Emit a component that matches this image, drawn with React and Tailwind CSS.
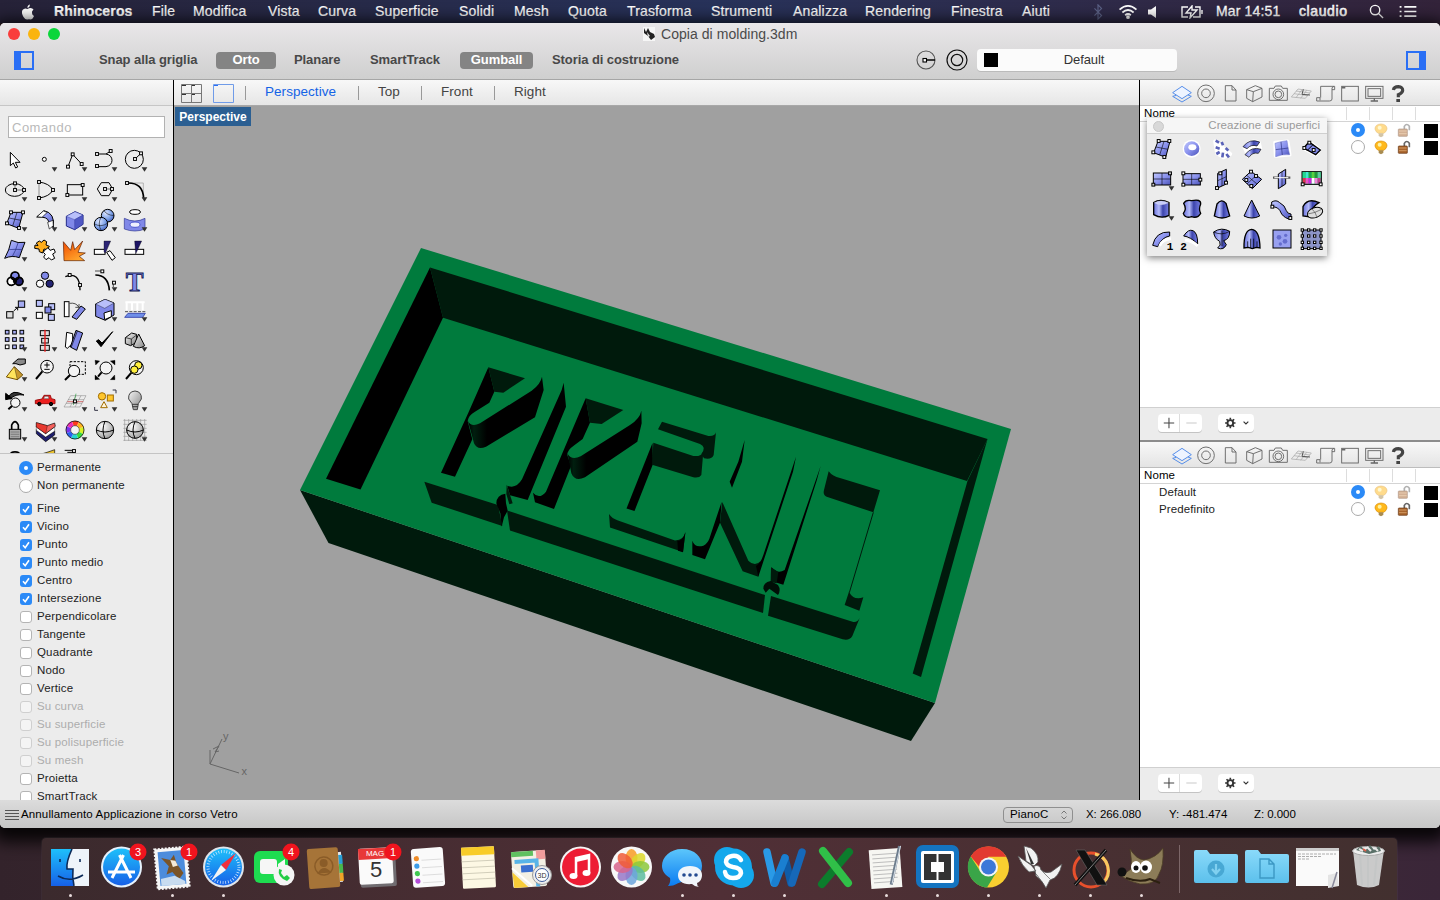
import React from "react";

const BLUE = "#8088e8";
const LIGHT = "#b9c0fa";

/* ---------- small drawing helpers ---------- */

function Sq({ at, s = 8.6, fill = "#fff" }) {
  return at.map(([x, y], i) => (
    <rect key={i} x={x - s / 2} y={y - s / 2} width={s} height={s} fill={fill} stroke="#000" strokeWidth="3" />
  ));
}

function Defs() {
  return (
    <svg className="absolute h-0 w-0" aria-hidden="true">
      <defs>
        <linearGradient id="blueFill" x1="0" y1="0" x2="1" y2="1">
          <stop offset="0" stopColor="#c0c7fc" />
          <stop offset="0.5" stopColor="#8a92ee" />
          <stop offset="1" stopColor="#4a52b8" />
        </linearGradient>
        <linearGradient id="blueBand" x1="0" y1="0" x2="1" y2="0">
          <stop offset="0" stopColor="#6870dc" />
          <stop offset="0.35" stopColor="#b4bbfa" />
          <stop offset="0.6" stopColor="#3c44ac" />
          <stop offset="1" stopColor="#7a82e6" />
        </linearGradient>
        <linearGradient id="grayFill" x1="0" y1="0" x2="1" y2="1">
          <stop offset="0" stopColor="#f4f4f4" />
          <stop offset="1" stopColor="#858585" />
        </linearGradient>
        <linearGradient id="orangeFill" x1="0" y1="0" x2="0.6" y2="1">
          <stop offset="0" stopColor="#f04800" />
          <stop offset="1" stopColor="#ffa52c" />
        </linearGradient>
        <linearGradient id="skyFill" x1="0" y1="0" x2="0" y2="1">
          <stop offset="0" stopColor="#1ec0fa" />
          <stop offset="1" stopColor="#1660e8" />
        </linearGradient>
        <linearGradient id="bubbleFill" x1="0" y1="0" x2="0" y2="1">
          <stop offset="0" stopColor="#5cc6fb" />
          <stop offset="1" stopColor="#0a7cf2" />
        </linearGradient>
        <linearGradient id="wallEnd" x1="0" y1="0" x2="1" y2="0">
          <stop offset="0" stopColor="#000" />
          <stop offset="0.08" stopColor="#001f0f" />
          <stop offset="0.25" stopColor="#000" />
        </linearGradient>
        <linearGradient id="calcFolder" x1="0" y1="0" x2="0" y2="1">
          <stop offset="0" stopColor="#8adafa" />
          <stop offset="1" stopColor="#5cc0ec" />
        </linearGradient>
        <radialGradient id="ball" cx="0.35" cy="0.3" r="0.8">
          <stop offset="0" stopColor="#dde6ff" />
          <stop offset="0.6" stopColor="#7ba0e8" />
          <stop offset="1" stopColor="#3c56b4" />
        </radialGradient>
        <radialGradient id="grayBall" cx="0.35" cy="0.3" r="0.9">
          <stop offset="0" stopColor="#fff" />
          <stop offset="1" stopColor="#8c8c8c" />
        </radialGradient>
      </defs>
    </svg>
  );
}

const Drop = () => <path d="M65 67H82L73.5 80Z" fill="#333" />;

function Tool({ children, drop }) {
  return (
    <svg viewBox="0 0 90 90" className="block h-[30px] w-[30px] overflow-visible" fill="none" stroke="#000" strokeWidth="3">
      {children}
      {drop ? <g stroke="none"><Drop /></g> : null}
    </svg>
  );
}

const Lens = ({ x = 45, y = 38, r = 18, tx = 18, ty = 72 }) => (
  <>
    <path d={`M${x - r * 0.7} ${y + r * 0.7}L${tx} ${ty}`} strokeWidth="6" />
    <circle cx={x} cy={y} r={r} fill="#f4f4f4" />
  </>
);

const Mesh4 = () => (
  <>
    <path d="M33 22H69L56 70L20 56Z" fill="url(#blueFill)" />
    <path d="M51 22L38 63M27 39L63 46" strokeWidth="1.8" />
  </>
);

/* ---------- left tool palette ---------- */

const tools = [
  [0, <path d="M31 22V62L40 54L47 69L53 66L46 52H60Z" fill="#fff" />],
  [1, <circle cx="43" cy="43" r="6" fill="#fff" />],
  [1, <><path d="M24 65L38 28L65 57" /><Sq at={[[24, 65], [38, 28], [65, 57]]} /></>],
  [1, <><path d="M21 27H48C72 30 72 62 48 65H21M48 27L62 18" strokeWidth="3" /><Sq at={[[21, 27], [62, 18], [21, 63]]} /></>],
  [1, <><circle cx="43" cy="43" r="27" /><path d="M45 42L63 25" /><Sq at={[[45, 42], [63, 25]]} /></>],

  [1, <><ellipse cx="44" cy="45" rx="28" ry="19" /><path d="M45 25V45H72" strokeWidth="1.6" /><Sq at={[[45, 25], [45, 45], [72, 45]]} /></>],
  [1, <><path d="M27 21V69" strokeWidth="1.2" /><path d="M27 21Q58 25 69 45Q58 65 27 69" /><Sq at={[[27, 21], [27, 69], [69, 45]]} /></>],
  [1, <><rect x="22" y="29" width="46" height="31" /><Sq at={[[22, 60], [68, 30]]} /></>],
  [1, <><path d="M34 23H57L68 42L57 62H34L22 42Z" /><path d="M45 42H66" strokeWidth="1.6" /><Sq at={[[45, 42], [66, 42]]} /></>],
  [1, <><path d="M21 24H70V70" stroke="#999" strokeWidth="2" /><path d="M21 24Q70 22 71 72" strokeWidth="5" /><Sq at={[[21, 24]]} /></>],

  [1, <><Mesh4 /><Sq at={[[33, 22], [69, 22], [57, 69], [21, 55]]} /></>],
  [1, <><path d="M20 36L42 17Q76 24 70 68L56 50Q54 34 20 36Z" fill="url(#blueFill)" /><path d="M21 35L40 18L52 22L36 37Z" fill="#fff" strokeWidth="2" /><path d="M53 52L69 46L70 62L58 72Z" fill="#fff" strokeWidth="2" /></>],
  [1, <><path d="M19 34L45 20L69 30V58L44 74L19 63Z" fill={BLUE} stroke="#222a88" /><path d="M19 34L45 20L69 30L44 44Z" fill={LIGHT} strokeWidth="1" stroke="#222a88" /><path d="M44 44L69 30V58L44 74Z" fill="#5058c4" strokeWidth="1" stroke="#222a88" /></>],
  [1, <><circle cx="53" cy="32" r="19" fill="url(#ball)" /><circle cx="33" cy="57" r="20" fill="url(#ball)" /><path d="M14 57Q33 68 52 55M33 37Q22 57 34 77M42 17Q50 30 72 32" strokeWidth="1.6" /></>],
  [1, <><ellipse cx="45" cy="21" rx="16" ry="7" fill="#fff" /><path d="M13 40Q45 56 75 40V72Q45 84 13 72Z" fill={BLUE} strokeWidth="2" stroke="#2c3490" /><ellipse cx="45" cy="59" rx="15" ry="8" fill="#eef0ff" stroke="#4b56d0" /></>],

  [1, <><path d="M34 16Q54 26 75 22Q66 44 58 68Q36 60 14 70Q28 46 34 16Z" fill="url(#blueFill)" /><path d="M54 24Q48 46 36 66M25 44Q46 42 68 44" strokeWidth="2" stroke="#222a78" /></>],
  [0, <><path d="M19 24L28 18L34 22L42 15L50 20L48 30L58 34L52 44L42 42L38 54L28 50L27 42L14 40L15 30L24 32Z" fill="#ffae1c" /><path d="M44 46L54 38L60 46L72 42L76 52L68 57L74 70L64 75L57 68L48 74L41 66L46 58L40 52Z" fill="#fff" /></>],
  [0, <path d="M10 20L32 46L38 20L44 44L68 18L54 52L76 54L58 64L74 77H12Z" fill="url(#orangeFill)" stroke="#5a1c00" strokeWidth="2" />],
  [0, <><rect x="13" y="43" width="32" height="15" fill="#fff" /><path d="M50 52L60 47L76 68L66 76Z" fill="#fff" /><path d="M42 18H62L46 55L42 50Z" fill="#2c2474" strokeWidth="1" /></>],
  [0, <><rect x="15" y="43" width="56" height="15" fill="#fff" /><path d="M44 18H65L47 57Z" fill="#1c1464" strokeWidth="1" /></>],

  [1, <><circle cx="34" cy="49" r="12" fill="#fff" /><circle cx="57" cy="49" r="12" fill="#242474" /><circle cx="45" cy="33" r="12" fill={BLUE} /><path d="M45 57Q35 48 45 40Q55 48 45 57Z" fill="#111" /><circle cx="34" cy="49" r="12" strokeWidth="5" /><circle cx="57" cy="49" r="12" strokeWidth="5" /><circle cx="45" cy="33" r="12" strokeWidth="5" /></>],
  [0, <><circle cx="45" cy="32" r="11" fill={BLUE} /><circle cx="30" cy="56" r="11" fill="#fff" /><circle cx="59" cy="56" r="11" fill="#242474" /></>],
  [0, <><path d="M16 35Q60 18 60 76" strokeWidth="4" /><Sq at={[[29, 30], [60, 60]]} /></>],
  [1, <><path d="M16 30Q55 30 58 76" strokeWidth="5" /><path d="M15 18H34M70 48V66" strokeWidth="2" /><Sq at={[[37, 19], [72, 53]]} /></>],
  [0, <text x="17" y="77" fontFamily="Liberation Serif, serif" fontSize="80" fontWeight="bold" fill={BLUE} stroke="#111650" strokeWidth="2.5">T</text>],

  [1, <><rect x="20" y="50" width="19" height="19" fill="#ddd" /><rect x="55" y="18" width="19" height="19" fill="#a4aaf0" /><path d="M41 48L52 38M45 37H53V46" /></>],
  [0, <>{[[19, 16, LIGHT], [19, 52, "#fff"], [55, 58, LIGHT], [56, 26, LIGHT], [45, 36, BLUE]].map(([x, y, f], i) => <rect key={i} x={x} y={y} width="18" height="18" fill={f} />)}</>],
  [0, <><rect x="13" y="20" width="14" height="45" fill="#fff" /><path d="M63 33L76 42L50 73L36 66Z" fill={BLUE} /><path d="M29 25Q48 22 56 36M57 27V37H46" strokeWidth="2" /></>],
  [1, <><path d="M17 27L45 13L72 24V60L46 76L17 64Z" fill={BLUE} /><path d="M17 27L45 13L72 24L44 40Z" fill={LIGHT} strokeWidth="1" /><path d="M42 54L64 47V65L44 74Z" fill="#fff" /></>],
  [1, <><path d="M16 22H74M20 22V46M36 22V46M52 22V46M68 22V46" stroke="#fff" strokeWidth="6" /><path d="M15 50H76" strokeDasharray="9 4" strokeWidth="2" /><path d="M24 55H76L68 67H14Z" fill="#6f8fe8" stroke="#4250b4" /></>],

  [1, <>{[16, 38, 60].flatMap((x) => [16, 38, 60].map((y) => <rect key={x + "-" + y} x={x} y={y} width="11" height="11" fill={x === 16 && y === 60 ? "#fff" : "#a8aef4"} />))}</>],
  [1, <><rect x="31" y="17" width="27" height="15" fill="#ddd" /><rect x="35" y="40" width="20" height="14" fill="#ddd" /><rect x="31" y="61" width="27" height="15" fill="#ddd" /><path d="M45 14V80" stroke="#f01818" strokeWidth="4" /></>],
  [1, <><path d="M20 22L38 26V55L22 70L16 66Z" fill="#fff" /><path d="M48 16L68 24L50 76L31 66Z" fill={BLUE} /><path d="M34 66L52 18" strokeWidth="2" /></>],
  [1, <path d="M19 48L33 65L68 20L36 54L26 44Z" strokeWidth="3" fill="#000" />],
  [1, <><path d="M16 38L35 24L50 28V52L32 62L16 56Z" fill="url(#grayFill)" /><path d="M17 38L34 42L50 30M34 42V60" strokeWidth="2" /><path d="M56 27L74 62Q58 74 40 64Z" fill="url(#grayFill)" /></>],

  [1, <><path d="M19 66L43 35L68 60L52 74Z" fill="#ffe45c" stroke="#7a5400" /><path d="M43 35L68 60L52 74Z" fill="#c8982c" strokeWidth="1" /><path d="M38 26L54 12L76 12V26L60 30L48 26Z" fill="#8a8a8a" /></>],
  [0, <><Lens x={51} y={35} r={19} /><path d="M43 30H59M51 22V38M43 43H59" strokeWidth="3" /></>],
  [0, <><rect x="30" y="20" width="46" height="38" strokeDasharray="7 4" /><Lens x={42} y={48} r={17} tx={15} ty={75} /></>],
  [0, <><path d="M15 16L29 18L17 30ZM75 16V30L61 18ZM15 74V60L29 73ZM75 74H61L74 60Z" fill="#000" strokeWidth="1" /><Lens x={48} y={39} r={18} tx={24} ty={65} /></>],
  [0, <><Lens x={49} y={38} r={21} /><circle cx="55" cy="31" r="11" fill="#ffef3e" /><circle cx="43" cy="44" r="11" fill="#ffef3e" /></>],

  [1, <><path d="M24 39Q36 10 72 30Q45 26 31 42Z" fill="#333" /><path d="M17 25V44L36 40Z" fill="#000" /><Lens x={46} y={53} r={14} tx={25} ty={73} /></>],
  [1, <><path d="M16 46L36 42L42 31H61L64 41L75 44V56H16Z" fill="#ed2020" stroke="#a01010" /><circle cx="28" cy="57" r="5" fill="#111" /><circle cx="63" cy="57" r="5" fill="#111" /><path d="M44 34H55L57 41H41Z" fill="#eee" strokeWidth="1" /></>],
  [1, <><path d="M32 32H78L60 66H12ZM24 44H72M18 55H66M48 32L30 66M63 32L45 66" strokeWidth="1.4" stroke="#777" /><path d="M48 26L40 60" stroke="#2c9c40" strokeWidth="2" /><path d="M22 50H70" stroke="#c83030" strokeWidth="2" /><Sq at={[[45, 49]]} /></>],
  [1, <><circle cx="36" cy="34" r="11" fill="#ffc62c" stroke="#a06c00" /><rect x="52" y="30" width="18" height="18" fill="#ffc62c" stroke="#a06c00" /><path d="M42 50L32 68H52Z" fill="#fff3d8" stroke="#a06c00" /><path d="M68 15H78V25M14 66V76H24" strokeWidth="3" stroke="#334" /></>],
  [1, <><path d="M45 18Q66 20 64 42L55 56L52 74H40L36 56L26 42Q24 20 45 18Z" fill="url(#grayFill)" stroke="#444" /><path d="M37 58H54M38 65H53" strokeWidth="2" /></>],

  [1, <><path d="M35 45V30Q45 10 55 30V45" strokeWidth="5" /><rect x="28" y="43" width="34" height="29" fill="#aaa" /><path d="M32 51H58M32 58H58M32 65H58" stroke="#666" strokeWidth="2" /></>],
  [1, <><path d="M19 43L47 66L74 48V60L47 80L19 56Z" fill="#20206e" strokeWidth="2" /><path d="M19 33L47 56L74 36V48L47 66L19 46Z" fill="#fff" strokeWidth="1" /><path d="M19 23L52 32L74 24L76 34L47 56L19 36Z" fill="#f4605c" strokeWidth="2" /><path d="M19 23L52 32L47 56L19 36Z" fill="#e83a30" strokeWidth="1" /></>],
  [1, <>{["#ff3b1c", "#ffb31c", "#d6f224", "#35dc3c", "#22d7d0", "#2864f0", "#7a34ec", "#ef2cb4"].map((c, i) => <path key={c} d="M45 45L37 20A27 27 0 0 1 56 20Z" transform={`rotate(${i * 45} 45 45)`} fill={c} stroke={c} strokeWidth="1" />)}<circle cx="45" cy="45" r="27" strokeWidth="2.2" /><circle cx="45" cy="45" r="13" fill="#f4f4f4" strokeWidth="2" stroke="#444" /></>],
  [0, <><circle cx="45" cy="45" r="26" fill="url(#grayBall)" /><path d="M45 19Q33 45 45 71M19 45Q45 57 71 45" /></>],
  [1, <><path d="M14 12V78M26 12V78M38 12V78M50 12V78M62 12V78M74 12V78M10 16H80M10 28H80M10 40H80M10 52H80M10 64H80M10 76H80" stroke="#999" strokeWidth="2" /><circle cx="45" cy="45" r="25" fill="url(#grayBall)" /><path d="M45 20Q33 45 45 70M20 45Q45 57 70 45" /></>],

  [0, <path d="M32 24Q45 17 58 24" strokeWidth="5" />],
  [0, <path d="M38 26L54 21L74 14V30H38Z" fill="#e8c030" strokeWidth="2" />],
  [0, <><path d="M14 16H38M22 22H40" strokeWidth="3" /><Sq at={[[42, 18]]} /></>],
];

/* ---------- floating surface palette ---------- */

const Halo = ({ d }) => <path d={d} stroke="#fff" strokeWidth="11" strokeLinejoin="round" fill="#fff" />;

const surfaces = [
  [0, <><Mesh4 /><Sq at={[[35, 21], [67, 21], [52, 69], [19, 55]]} /></>],
  [0, <><circle cx="44" cy="44" r="27" fill="#fff" stroke="none" /><ellipse cx="44" cy="44" rx="23" ry="22" fill="url(#blueFill)" stroke="none" /><ellipse cx="46" cy="40" rx="12" ry="9" fill="#fff" stroke="none" /></>],
  [0, <><Halo d="M24 22L70 60L50 70L30 58Z" /><path d="M26 20L36 26M44 24L48 34M26 40L38 44M28 60L38 54M46 70L48 56M56 42L64 50M58 60L66 70" stroke="#5a62b8" strokeWidth="8" /></>],
  [0, <><Halo d="M22 40Q40 14 66 26L70 44Q50 46 34 66Z" /><path d="M18 38Q38 12 68 24L60 36Q42 30 30 44ZM24 62Q44 36 72 46L64 58Q46 54 36 70Z" fill="url(#blueBand)" strokeWidth="2" /></>],
  [0, <><Halo d="M24 26L62 22L68 62L26 66Z" /><path d="M24 28Q42 22 60 20Q62 40 68 62Q46 60 26 68Q28 48 24 28Z" fill="url(#blueFill)" stroke="#6870c8" strokeWidth="1.5" /><path d="M42 24L46 63M26 47L64 42" strokeWidth="2" stroke="#2c3280" /></>],
  [0, <><Halo d="M22 44L38 24L68 48L56 62Z" /><path d="M20 42L36 24L70 48L56 62Z" fill={BLUE} strokeWidth="4" /><path d="M30 50L48 32" /><Sq at={[[37, 26], [22, 42], [50, 48]]} /></>],

  [1, <><rect x="19" y="27" width="52" height="36" fill="url(#blueFill)" /><path d="M45 27V63M19 45H71" strokeWidth="1.8" /><Sq at={[[19, 62], [69, 28]]} fill="#ccc" /></>],
  [0, <><rect x="18" y="29" width="52" height="34" fill="url(#blueFill)" /><path d="M44 29V63M18 46H70" strokeWidth="1.8" /><Sq at={[[19, 28], [19, 62], [70, 47]]} /></>],
  [0, <><path d="M32 28L58 16V60L32 72Z" fill="url(#blueFill)" /><path d="M45 22V66M32 50L58 38" strokeWidth="1.8" /><Sq at={[[40, 28], [30, 72], [57, 56]]} /></>],
  [0, <><path d="M16 46L42 22L74 46L46 74Z" fill="url(#blueFill)" /><path d="M29 34L60 60M30 60L58 34" strokeWidth="1.8" /><Sq at={[[42, 23], [57, 36], [28, 48], [43, 66]]} /></>],
  [0, <><path d="M34 30L56 16V60L34 74Z" fill="url(#blueFill)" /><path d="M45 23V67" strokeWidth="1.8" /><path d="M18 41H34M50 41H70" stroke="#555" strokeWidth="7" /><path d="M22 41H64" stroke="#fff" strokeWidth="3" /></>],
  [0, <><rect x="15" y="23" width="58" height="38" fill="#18b060" />{["#20d890", "#40e8d0", "#18a848", "#58d040", "#209838", "#60c8a0"].map((c, i) => <rect key={c} x={17 + i * 9} y="24" width="9" height="18" fill={c} stroke="none" />)}{["#e03050", "#f050c8", "#d020e0", "#fff", "#f080d8", "#c04090"].map((c, i) => <rect key={c} x={17 + i * 9} y="42" width="9" height="17" fill={c} stroke="none" />)}<Sq at={[[17, 61], [71, 61]]} /></>],

  [1, <><path d="M20 26Q40 12 66 26V64Q44 76 20 62Z" fill="url(#blueBand)" strokeWidth="4" /><path d="M22 26Q42 16 64 26Q42 38 22 26Z" strokeWidth="1" stroke="#dde" fill="#c8cdfc" /></>],
  [0, <path d="M20 28Q26 16 44 20Q72 14 71 30Q64 46 71 58Q62 74 44 68Q24 74 19 58Q30 44 20 28Z" fill="url(#blueBand)" strokeWidth="4" />],
  [0, <path d="M30 30Q44 12 57 28L68 66Q45 78 22 66Z" fill="url(#blueBand)" strokeWidth="4" />],
  [0, <path d="M44 18L68 66Q45 78 21 66Z" fill="url(#blueBand)" strokeWidth="3" />],
  [0, <><path d="M14 24Q28 16 38 26Q54 34 58 50Q62 60 72 60V76Q54 74 44 60Q34 34 14 40Z" fill="url(#blueFill)" strokeWidth="3" /><Sq at={[[16, 38], [70, 72]]} /></>],
  [0, <><path d="M18 66V38Q32 10 66 26Q46 36 36 68Z" fill="url(#blueBand)" strokeWidth="4" /><ellipse cx="54" cy="56" rx="24" ry="15" fill="#ddd" transform="rotate(-20 54 56)" /><path d="M44 44Q56 54 60 70M32 60Q52 58 74 46" strokeWidth="1.3" /></>],

  [0, <><path d="M17 64Q26 22 68 24V36Q44 40 32 68Z" fill="url(#blueFill)" strokeWidth="3" /><path d="M38 66Q46 46 72 44" stroke="#fff" strokeWidth="8" /><text x="59" y="78" fontSize="33" fontFamily="Liberation Mono, monospace" fontWeight="bold" fill="#000" stroke="none">1</text></>],
  [0, <><path d="M20 36Q34 14 48 20Q62 26 62 60Q40 38 20 36Z" fill="url(#blueBand)" strokeWidth="3" /><path d="M24 48Q46 50 62 66" stroke="#fff" strokeWidth="9" /><text x="10" y="79" fontSize="33" fontFamily="Liberation Mono, monospace" fontWeight="bold" fill="#000" stroke="none">2</text></>],
  [0, <><path d="M20 24Q44 8 68 22Q68 46 50 50L58 62Q50 80 32 72Q44 64 38 52Q22 44 20 24Z" fill="url(#blueBand)" /><path d="M20 24Q44 36 68 22M45 20V66" strokeWidth="2" /></>],
  [0, <><path d="M21 72Q20 18 44 16Q68 18 69 72L58 70L46 74L34 70Z" fill="url(#blueBand)" strokeWidth="4" /><path d="M32 52V70M41 44V72M50 44V72M60 52V70" strokeWidth="2.2" /></>],
  [0, <><rect x="18" y="18" width="54" height="54" fill="#98a0f0" /><g fill="#5058c0" stroke="none" opacity="0.7"><circle cx="36" cy="40" r="7" /><circle cx="54" cy="52" r="7" /><circle cx="56" cy="34" r="5" /><circle cx="40" cy="60" r="5" /></g></>],
  [0, <><rect x="16" y="18" width="56" height="56" fill="#8c94c8" /><Sq s={7} at={[16, 35, 53, 72].flatMap((x) => [18, 36, 55, 73].map((y) => [x, y]))} /></>],
];

/* ---------- inspector tabs ---------- */

const tabs = [
  <g stroke="#4a86e8"><path d="M19 43L8 46L36 63L64 46L54 42" fill="none" /><path d="M8 35L36 16L64 35L36 53Z" fill="#eef4ff" /></g>,
  <><circle cx="36" cy="37" r="25" /><circle cx="36" cy="37" r="13" /></>,
  <path d="M22 14H42L54 27V60H22ZM42 14V27H54" />,
  <path d="M14 26L40 14L60 22V48L32 62L14 52ZM14 26L34 32L60 22M34 32L32 62" />,
  <><path d="M10 22H24L28 15H46L50 22H64V58H10Z" /><circle cx="37" cy="40" r="16" /><circle cx="37" cy="40" r="10" /></>,
  <g stroke="#aaa" strokeWidth="2.2"><path d="M24 24L64 30L46 52L4 48ZM18 30L60 36M12 38L54 44M36 26L18 50M50 28L32 52" /><path d="M40 25L36 40L60 42" stroke="#555" strokeWidth="3" /></g>,
  <path d="M20 16H62V26H54M54 20V54Q54 60 46 60H8V50H18V58M20 16V50M54 20L60 16" />,
  <><rect x="11" y="16" width="50" height="44" /><path d="M12 20H22" strokeWidth="5" /></>,
  <><rect x="11" y="16" width="52" height="36" /><rect x="18" y="23" width="38" height="23" /><path d="M26 60H48M37 52V60" strokeWidth="4" /></>,
  <path d="M22 27Q24 17 37 17Q51 18 50 29Q48 37 37 41V49" stroke="#444" strokeWidth="9.5" />,
];

function TabBar() {
  return (
    <div className="flex h-[26px] shrink-0 items-center border-b border-[#bdbdbd] bg-linear-to-b from-[#f8f8f8] to-[#e4e4e4] pl-[30px]">
      {tabs.map((t, i) => (
        <svg key={i} viewBox="0 0 72 72" className="mt-px block h-6 w-6" fill="none" stroke="#666" strokeWidth="2.8">
          {t}
          {i === 9 ? <rect x="31" y="54" width="11" height="9" fill="#444" stroke="none" /> : null}
        </svg>
      ))}
    </div>
  );
}

function Radio({ on }) {
  return on ? (
    <span className="flex h-[14px] w-[14px] shrink-0 items-center justify-center rounded-full bg-[#2b8af7]">
      <span className="h-[4px] w-[4px] rounded-full bg-white" />
    </span>
  ) : (
    <span className="h-[14px] w-[14px] shrink-0 rounded-full border border-[#aaa] bg-white" />
  );
}

function LayerRow({ name, on }) {
  return (
    <div className="flex h-[17px] items-center">
      <span className="w-[211px] pl-[19px] text-[11.5px] tracking-[0.1px] text-[#222]">{name}</span>
      <span className="-mt-[2px] flex"><Radio on={on} /></span>
      <svg viewBox="0 0 42 45" className={on ? "ml-[9px] h-[15px] w-[14px] opacity-50" : "ml-[9px] h-[15px] w-[14px]"}>
        <path d="M21 3Q39 4 39 18Q37 27 29 31H13Q5 27 3 18Q3 4 21 3Z" fill="#ffb91c" stroke="#d88a00" strokeWidth="2" />
        <circle cx="17" cy="14" r="6" fill="#fff2a0" />
        <path d="M14 31H28V39L21 43L14 39Z" fill="#a88b50" />
      </svg>
      <svg viewBox="0 0 42 45" className={on ? "ml-[9px] h-[15px] w-[14px] opacity-50" : "ml-[9px] h-[15px] w-[14px]"}>
        <path d="M22 20V10Q29 -1 37 10V22" fill="none" stroke="#666" strokeWidth="5" />
        <rect x="4" y="18" width="27" height="22" rx="2" fill="#a8642c" stroke="#653410" strokeWidth="2" />
        <path d="M6 24H29M6 32H29" stroke="#e8b47c" strokeWidth="2" />
      </svg>
      <span className="ml-[13px] h-[14px] w-[14px] bg-black" />
    </div>
  );
}

function LayerHeader() {
  return (
    <div className="flex h-4 shrink-0 items-center border-b border-[#d4d4d4] bg-white text-[11.5px] tracking-[0.1px]">
      <span className="w-[206px] pl-1">Nome</span>
      <span className="h-[13px] w-[23px] border-l border-[#ddd]" />
      <span className="h-[13px] w-[23px] border-l border-[#ddd]" />
      <span className="h-[13px] w-[23px] border-l border-[#ddd]" />
      <span className="h-[13px] w-[23px] border-l border-[#ddd]" />
    </div>
  );
}

function LayerFooter() {
  return (
    <div className="flex h-[33px] shrink-0 items-start border-t border-[#d0d0d0] bg-[#ececec] pt-[6px] pl-[18px]">
      <div className="flex h-[18px] w-11 rounded bg-white shadow-[0_1px_0_#c4c4c4]">
        <svg viewBox="0 0 22 19" className="h-[18px] w-[22px] border-r border-[#ddd]" stroke="#444" strokeWidth="1.1"><path d="M6 9.5H17M11.5 4V15" /></svg>
        <svg viewBox="0 0 22 19" className="h-[18px] w-[22px]" stroke="#ccc" strokeWidth="1.1"><path d="M6 9.5H17" /></svg>
      </div>
      <div className="ml-4 flex h-[18px] w-9 rounded bg-white shadow-[0_1px_0_#c4c4c4]">
        <svg viewBox="0 0 36 19" className="h-[18px] w-9" fill="none" stroke="#333">
          <circle cx="12" cy="9.500" r="3" strokeWidth="2" />
          <path d="M12 4V6M12 13V15M6.500 9.500H8.500M15.500 9.500H17.500M8 5.500L9.500 7M14.500 12L16 13.500M16 5.500L14.500 7M9.500 12L8 13.500" strokeWidth="1.700" />
          <path d="M26 8L28.500 10.500L31 8" strokeWidth="1.200" />
        </svg>
      </div>
    </div>
  );
}

/* ---------- 3D viewport ---------- */

function Model() {
  const G = "#007b3d";
  const D = "#001a0c";
  return (
    <svg viewBox="174 106 965 694" className="block h-[694px] w-[965px]">
      <rect x="174" y="106" width="965" height="694" fill="#a0a0a0" />
      <path d="M300 490L935 703L911 741L328.500 543Z" fill={D} />
      <path d="M421 248L1011 429L935 703L300 490Z" fill={G} />
      <path d="M430 267.500L987.500 439L967 481L443 317.700Z" fill={D} />
      <path d="M987.500 439L921 677L912.700 673.500L967.500 481Z" fill={D} />
      <path d="M430 267.500L443 317.700L360.500 489.500L326 478.700Z" fill="#000" />

      <g transform="translate(400 340) scale(0.33333)">
        <path d="M265 82L375 115L310 158L283 155Z" fill={D} />
        <path d="M265 82L283 155L268 188L225 215Q205 226 203 243L217 298L165 410L123 398L205 218Z" fill="#000" />
        <path d="M204 243Q213 262 240 250L395 152Q422 132 426 110L431 150L405 232L258 320Q232 332 222 310Z" fill="url(#wallEnd)" />
        <path d="M491 128L498 200L383 480L330 466L322 437Q348 448 366 418L485 150Z" fill="#000" />
        <path d="M557 175L670 210L605 252L570 248Z" fill={D} />
        <path d="M557 175L570 248L548 297L520 318Q502 330 502 345L513 378L462 507L405 487L399 458Q418 480 438 455Z" fill="#000" />
        <path d="M503 342Q515 362 542 349L690 255Q720 235 724 212L725 250L712 305L555 412Q525 427 514 400Z" fill="url(#wallEnd)" />
        <path d="M73 425L294 495L307 558L95 488Z" fill={D} />
        <path d="M316 461Q290 464 289 490L301 520L305 560L312 532L323 512L318 490Z" fill="#000" />
        <path d="M320 434L338 490L328 493L319 462Z" fill={D} />
      </g>
      <path d="M507 510.500L765 595L763 613L510 530.500Z" fill={D} />
      <path d="M652.500 443L653 464L634.500 511L626.500 508.500Z" fill="#000" />
      <path d="M609 514Q612 518.500 618 520.500L675 540.500Q684 540 685.500 532L683 552L610 527.500Z" fill={D} />

      <g transform="translate(640 380) scale(0.33333)">
        <path d="M66 125L205 168Q224 170 228 157L221 225Q215 240 192 235L184 222Q200 200 180 192L54 148Z" fill={D} />
        <path d="M40 188L160 228Q185 230 190 215L184 285Q178 295 160 292L36 254Z" fill={D} />
        <path d="M314 180L306 245L276 323L269 305L295 245Z" fill="#000" />
        <path d="M157 482Q165 505 190 497Q203 490 208 476L245 365L240 428L195 538L157 525Z" fill="#000" />
        <path d="M247 366L325 542Q345 562 362 543L355 590L308 574L240 428Z" fill={D} />
        <path d="M468 230L459 275L355 590L348 558Q362 550 370 525Z" fill="#000" />
        <path d="M136 457L129 517L114 512L112 483Q128 483 136 457Z" fill="#000" />
        <path d="M542 258L530 302L430 614L396 604L395 562Q412 584 434 570Z" fill="#000" />
        <path d="M393 562L415 576L410 610L392 606Z" fill={D} />
        <path d="M392 603Q369 608 370 626L377 638L388 626L414 645Q424 630 414 615Z" fill="#000f07" />
        <path d="M393 648L640 726Q652 728 659 714L637 768Q628 783 608 778L384 707Z" fill={D} />
        <path d="M566 274Q578 290 600 294L720 331L700 397L560 350Q548 344 552 330Z" fill={D} />
        <path d="M700 397L628 638" stroke="#001a0c" strokeWidth="3" />
        <path d="M627 635Q640 662 670 652L658 692L614 675Z" fill={D} />
      </g>

      <g stroke="#666" strokeWidth="1" fill="none">
        <path d="M210 764L222 739M210 764L239 773M210 764V750M213 749L219 746L215 752L219 751" />
      </g>
      <g fill="#666" fontFamily="Liberation Sans, sans-serif" fontSize="11">
        <text x="223" y="740">y</text>
        <text x="241.500" y="775">x</text>
      </g>
    </svg>
  );
}

/* ---------- dock ---------- */

const Badge = ({ n }) => (
  <>
    <circle cx="42" cy="10" r="8.500" fill="#f0141e" />
    <text x="42" y="14" fontSize="11" textAnchor="middle" fill="#fff" fontFamily="Liberation Sans, sans-serif">{n}</text>
  </>
);

const dock = [
  [1, <><path d="M6 7H44V44H6Z" fill="#eef4fa" /><path d="M6 7H27Q21 20 22 27H28Q27 35 29 44H6Z" fill="url(#skyFill)" /><path d="M27 7Q21 20 22 27H28Q27 35 29 44M13 34Q25 41 38 33M15 17V20M35 17V20" stroke="#0c2a58" strokeWidth="1.600" fill="none" /></>],
  [0, <><circle cx="25.500" cy="25" r="20.500" fill="#e6f2fc" /><circle cx="25.500" cy="25" r="18.500" fill="url(#skyFill)" /><path d="M16 36L27.500 13M35 36L23.500 13M12 30H39" stroke="#fff" strokeWidth="3" fill="none" /><Badge n="3" /></>],
  [1, <><g transform="rotate(-5 25 26)"><rect x="9" y="6" width="32" height="40" fill="#f6f6f6" stroke="#f6f6f6" strokeWidth="2" strokeDasharray="2 1.500" /><rect x="12" y="9" width="26" height="34" fill="#4c8cdc" /><path d="M15 15L24 18L28 13L30 22L36 32L31 38L25 30L19 32L22 24Z" fill="#7a5428" /><path d="M24 18L29 19L31 24L26 25Z" fill="#f4ead8" /><path d="M13 36L27 34L37 40V43H13Z" fill="#c8dcf0" /></g><Badge n="1" /></>],
  [1, <><circle cx="25.500" cy="25" r="20.500" fill="#dfe4ea" /><circle cx="25.500" cy="25" r="18.500" fill="url(#skyFill)" /><circle cx="25.500" cy="25" r="15.500" fill="none" stroke="#d8ecff" strokeWidth="3" strokeDasharray="0.700 2" /><path d="M38 11L28 28L23 23Z" fill="#f0303c" /><path d="M13 39L28 28L23 23Z" fill="#f4f4f4" /></>],
  [0, <><rect x="5" y="9" width="34" height="32" rx="6" fill="#1edc50" /><rect x="11" y="17" width="17" height="15" rx="3" fill="#f6f6f6" /><path d="M29 22L36 17V31L29 27Z" fill="#f6f6f6" /><circle cx="35" cy="33" r="10.500" fill="#f4f4f4" /><path d="M30 27Q28 35 38 39L41 36L38 33L35 35L32 31L33 28Z" fill="#22cc44" /><Badge n="4" /></>],
  [0, <><g transform="rotate(-4 25 26)"><rect x="38" y="11" width="4" height="30" fill="#e8e8e8" /><rect x="39" y="14" width="4" height="9" fill="#28a0d8" /><rect x="39" y="23" width="4" height="9" fill="#48b84c" /><rect x="39" y="32" width="4" height="8" fill="#f0a428" /><rect x="8" y="6" width="31" height="40" rx="2" fill="#a67438" /><circle cx="24" cy="24" r="9" fill="none" stroke="#8a5c28" strokeWidth="1.500" /><circle cx="24" cy="21" r="4" fill="#8a5c28" /><path d="M17 31Q24 21 31 31Z" fill="#8a5c28" /></g></>],
  [0, <><g transform="rotate(-3 25 26)"><rect x="9" y="8" width="36" height="37" rx="2" fill="#706c70" /><rect x="8" y="6" width="34" height="36" rx="2" fill="#fafafa" /><path d="M8 6H42V17H8Z" fill="#e83838" /></g><text x="24" y="14" fontSize="8" textAnchor="middle" fill="#fff" fontFamily="Liberation Sans, sans-serif">MAG</text><text x="25" y="35" fontSize="22" textAnchor="middle" fill="#333" fontFamily="Liberation Sans, sans-serif">5</text><Badge n="1" /></>],
  [0, <g transform="rotate(-4 25 26)"><rect x="10" y="6" width="32" height="39" rx="3" fill="#fafafa" />{["#f08c28", "#3c9ce8", "#40c850", "#b44cd8"].map((c, i) => <g key={c}><circle cx="15" cy={16 + i * 7.5} r="2.600" fill={c} /><path d={`M20 ${18 + i * 7.5}H40`} stroke="#ddd" strokeWidth="1" /></g>)}</g>],
  [0, <g transform="rotate(-3 25 26)"><rect x="9" y="5" width="33" height="41" rx="1" fill="#fdf8e4" /><rect x="9" y="5" width="33" height="8" fill="#f8cc28" /><path d="M9 19H42M9 25H42M9 31H42M9 37H42" stroke="#c8c4b0" strokeWidth="0.800" /></g>],
  [0, <><g transform="rotate(-4 25 26)"><rect x="8" y="9" width="34" height="36" rx="2" fill="#f3f0e4" /><path d="M8 9H30V14H8Z" fill="#60c060" /><path d="M33 9H42V18H33Z" fill="#f09c9c" /><path d="M11 19H33V45" fill="none" stroke="#58b4e8" strokeWidth="4" /><path d="M8 29L23 45H9Z" fill="#f8cc38" /><rect x="17" y="23" width="12" height="7" fill="#3c70d0" /><path d="M8 25L27 44" stroke="#fff" strokeWidth="2" /></g><circle cx="38" cy="33" r="9.500" fill="#ececec" stroke="#999" /><circle cx="38" cy="33" r="6.500" fill="#fff" stroke="#3c5c9c" /><text x="38" y="36" fontSize="7" textAnchor="middle" fill="#333" fontFamily="Liberation Sans, sans-serif">3D</text></>],
  [0, <><circle cx="25.500" cy="25" r="20.500" fill="#f5f5f5" /><circle cx="25.500" cy="25" r="18.500" fill="#ed1c34" /><path d="M21 34V16L34 13V31" fill="none" stroke="#fff" strokeWidth="2.500" /><path d="M21 18L34 15" stroke="#fff" strokeWidth="4" /><ellipse cx="18.500" cy="34" rx="4" ry="3" fill="#fff" /><ellipse cx="31.500" cy="31" rx="4" ry="3" fill="#fff" /></>],
  [0, <><circle cx="25.500" cy="25" r="20.500" fill="#f8f8f8" />{["#f89c24", "#dcd82c", "#8cc83c", "#5cbca0", "#6ca4dc", "#9878c8", "#d8648c", "#f05c38"].map((c, i) => <ellipse key={c} cx="25.500" cy="16" rx="6" ry="9" fill={c} opacity="0.850" transform={`rotate(${i * 45} 25.500 25)`} />)}</>],
  [1, <><path d="M25 7C38 7 45 15 45 24C45 34 37 40 25 40C21 40 19 44 11 44Q14 40 13 36C8 33 5 29 5 24C5 15 13 7 25 7Z" fill="url(#bubbleFill)" /><path d="M33 24C41 24 45 28 45 33C45 37 43 40 40 41Q40 44 42 45Q38 45 35 42C26 43 21 39 21 33C21 28 25 24 33 24Z" fill="#f1f5fa" /><circle cx="27" cy="33" r="1.800" fill="#244a90" /><circle cx="33" cy="33" r="1.800" fill="#244a90" /><circle cx="39" cy="33" r="1.800" fill="#244a90" /></>],
  [1, <><circle cx="19" cy="18" r="13" fill="#14a8ec" /><circle cx="33" cy="33" r="13" fill="#14a8ec" /><circle cx="25.500" cy="25" r="18.500" fill="#14a8ec" /><path d="M33 18Q30 13 24 14Q18 15 18 20Q19 24 25 25Q33 26 33 31Q32 36 25 36Q18 36 17 30" fill="none" stroke="#fff" strokeWidth="4.500" strokeLinecap="round" /></>],
  [1, <g strokeWidth="7.500" strokeLinecap="round"><path d="M26 16L32 41" stroke="#0e5ca8" /><path d="M8 10L15 41" stroke="#2a9ae6" /><path d="M26 16L16 41" stroke="#1a7fd0" /><path d="M43 10L33 41" stroke="#1668b8" /></g>],
  [0, <><path d="M39 10L12 42" stroke="#0c7c2c" strokeWidth="8" strokeLinecap="round" /><path d="M13 9L38 41" stroke="#30c048" strokeWidth="8" strokeLinecap="round" /></>],
  [1, <g transform="rotate(-4 25 26)"><rect x="9" y="7" width="31" height="39" fill="#f6f6f2" /><path d="M12 12H36M12 16H36M12 20H36M12 24H36M12 28H36M12 32H36M12 36H36M12 40H32" stroke="#b8b8b8" strokeWidth="0.900" /><path d="M40 5L29 43" stroke="#6c7c8c" strokeWidth="3" /><path d="M41 5L30 42" stroke="#d8e0e8" strokeWidth="1" /></g>],
  [1, <><rect x="4" y="3" width="43" height="43" rx="7" fill="#1474c0" /><rect x="9" y="9" width="33" height="32" rx="2" fill="#fff" /><path d="M12 12H24.500V20H19V30H24.500V38H12ZM39 12H26.500V20H32V30H26.500V38H39Z" fill="#333" /></>],
  [1, <><circle cx="25.500" cy="25" r="20.500" fill="#f8ce30" /><path d="M7.700 14.500A20.500 20.500 0 0 1 43.300 14.800H25.500L20 29Z" fill="#e23a30" /><path d="M7.700 14.500A20.500 20.500 0 0 0 24 45.500L33.500 30L17 29Z" fill="#3aa548" /><circle cx="25.500" cy="25" r="9.500" fill="#f4f4f4" /><circle cx="25.500" cy="25" r="7.500" fill="#3c78d8" /></>],
  [1, <><path d="M10 4L17 6Q25 12 24 20L20 24L12 19ZM4 14L17 23L22 29L15 30Q8 24 4 14ZM20 24Q26 22 27 28Q31 32 37 30L48 22Q45 36 36 38L32 46Q28 38 22 34Z" fill="#f2f2f2" stroke="#555" strokeWidth="0.800" /><path d="M12 6L20 22L17 22ZM18 27L31 44L24 34Z" fill="#333" /><path d="M27 28L36 37" stroke="#888" strokeWidth="1" /></>],
  [1, <><circle cx="26" cy="28" r="17" fill="none" stroke="#e8502c" strokeWidth="3" /><path d="M30 12A17 17 0 0 1 38 41" fill="none" stroke="#f8c860" strokeWidth="3" /><path d="M11 8H20L42 43H32Z" fill="#111" stroke="#666" strokeWidth="0.600" /><path d="M41 8L10 43" stroke="#111" strokeWidth="3.500" /><path d="M41 8L10 43" stroke="#999" strokeWidth="0.800" /></>],
  [1, <><path d="M14 7Q20 17 28 18Q40 16 47 6Q48 24 43 32Q40 43 24 42Q14 40 5 34L15 27Q16 18 14 7Z" fill="#8c7c58" stroke="#4a3c24" strokeWidth="0.800" /><circle cx="6" cy="30" r="4.500" fill="#111" /><ellipse cx="20" cy="25" rx="5" ry="6" fill="#fff" /><ellipse cx="30" cy="25" rx="6" ry="6.500" fill="#fff" /><circle cx="20" cy="26" r="2.500" fill="#111" /><circle cx="29" cy="26" r="2.800" fill="#111" /><path d="M10 36Q24 41 34 37L44 41" stroke="#2c2010" strokeWidth="2" fill="none" /></>],
];

const stack = [
  <><path d="M4 10Q4 8 6 8H17L20 12H46Q48 12 48 14V39Q48 41 46 41H6Q4 41 4 39Z" fill="url(#calcFolder)" /><circle cx="26" cy="27" r="8.500" fill="#48a8d4" /><path d="M26 22V31M22 27L26 31.500L30 27" stroke="#80d0f0" strokeWidth="2.200" fill="none" /></>,
  <><path d="M4 10Q4 8 6 8H17L20 12H46Q48 12 48 14V39Q48 41 46 41H6Q4 41 4 39Z" fill="url(#calcFolder)" /><path d="M19 17H28L33 22V36H19ZM28 17V22H33" stroke="#3c98c4" strokeWidth="1.400" fill="none" /></>,
  <><rect x="4" y="6" width="43" height="38" fill="#fafafa" /><path d="M4 6H47V9H4Z" fill="#ccc" /><path d="M6 12H44M6 14.500H30M6 17H18" stroke="#999" strokeWidth="0.800" strokeDasharray="3 1" /><path d="M36 33L45 31L47 44L36 46Z" fill="#e4e4e4" /><path d="M45 30L40 46" stroke="#889" strokeWidth="1.500" /></>,
  <><path d="M10 8L14 43Q26 48 36 43L41 8Z" fill="#d6d8d8" opacity="0.920" /><path d="M17 12L19 43M25 12V45M34 12L31 43" stroke="#c4c6c6" strokeWidth="2" /><ellipse cx="25.500" cy="9" rx="16" ry="4.500" fill="#eee" stroke="#aaa" /><path d="M13 8L18 4L22 9L27 3L31 8L36 4L38 9L26 12Z" fill="#5a7068" /><path d="M16 7L20 9M24 5L28 9M32 6L35 9" stroke="#e8e8e8" strokeWidth="2" /><path d="M20 7L23 9" stroke="#d85c48" strokeWidth="2" /></>,
];

function DockItem({ children, running }) {
  return (
    <div className="flex h-[62px] w-[51px] flex-col items-center pt-[4px]">
      <svg viewBox="0 0 51 51" className="block h-[51px] w-[51px] shrink-0 overflow-visible">{children}</svg>
      {running ? <span className="mt-px h-[3px] w-[3px] rounded-full bg-[#e8dcdc]" /> : null}
    </div>
  );
}

/* ---------- snap list ---------- */

const snaps = [
  ["Fine", 1], ["Vicino", 1], ["Punto", 1], ["Punto medio", 1], ["Centro", 1], ["Intersezione", 1],
  ["Perpendicolare", 0], ["Tangente", 0], ["Quadrante", 0], ["Nodo", 0], ["Vertice", 0],
  ["Su curva", 2], ["Su superficie", 2], ["Su polisuperficie", 2], ["Su mesh", 2],
  ["Proietta", 0], ["SmartTrack", 0],
];

function SnapRow({ label, state }) {
  return (
    <div className={state === 2 ? "flex h-[18px] shrink-0 items-center pl-5 text-[#adadad]" : "flex h-[18px] shrink-0 items-center pl-5 text-[#222]"}>
      {state === 1 ? (
        <svg viewBox="0 0 12 12" className="h-3 w-3 rounded-[3px] bg-[#2b8af7]" fill="none" stroke="#fff" strokeWidth="1.600"><path d="M3 6.300L5.200 8.800L9 3.200" /></svg>
      ) : (
        <span className={state === 2 ? "h-3 w-3 rounded-[3px] border border-[#cfcfcf] bg-[#f4f4f4]" : "h-3 w-3 rounded-[3px] border border-[#b4b4b4] bg-white"} />
      )}
      <span className="ml-[5px]">{label}</span>
    </div>
  );
}

const menus = [
  ["Rhinoceros", "w-[98px] font-bold"], ["File", "w-[41px]"], ["Modifica", "w-[75px]"], ["Vista", "w-[50px]"],
  ["Curva", "w-[57px]"], ["Superficie", "w-[84px]"], ["Solidi", "w-[55px]"], ["Mesh", "w-[54px]"],
  ["Quota", "w-[59px]"], ["Trasforma", "w-[84px]"], ["Strumenti", "w-[82px]"], ["Analizza", "w-[72px]"],
  ["Rendering", "w-[86px]"], ["Finestra", "w-[71px]"], ["Aiuti", "w-[66px]"],
];

export default function App() {
  return (
    <div className="relative flex h-[900px] w-[1440px] flex-col overflow-hidden bg-linear-to-r from-[#33232b] via-[#4a3038] to-[#3a2638] font-['Liberation_Sans',Arial,sans-serif] whitespace-nowrap">
      <Defs />

      <header className="flex h-[23px] shrink-0 items-center bg-linear-to-r from-[#262238] via-[#27325a] to-[#33233a] pl-5 text-[14px] tracking-[0.15px] text-white [-webkit-text-stroke:0.2px_#fff]">
        <svg viewBox="0 0 28 32" className="mr-[19px] h-4 w-[15px]" fill="#fff">
          <path d="M19 1Q19 6 14 8Q13 3 19 1ZM14 10Q17 8 20 8Q24 8 26 11Q22 14 23 18Q23 22 27 24Q24 31 20 31Q17 30 14 31Q10 32 6 26Q1 18 4 12Q8 7 14 10Z" />
        </svg>
        {menus.map(([label, cls]) => (
          <span key={label} className={cls}>{label}</span>
        ))}
        <svg viewBox="0 0 12 18" className="ml-[4px] h-[16px] w-3" fill="none" stroke="#5d6388" strokeWidth="1.300"><path d="M2 5L10 13L6 17V1L10 5L2 13" /></svg>
        <svg viewBox="0 0 22 16" className="ml-[13px] h-[15px] w-[22px]" fill="none" stroke="#fff" strokeWidth="2"><path d="M2 6Q11 -2 20 6M5 9Q11 4 17 9M8 12Q11 9.500 14 12" /><circle cx="11" cy="14" r="1" fill="#fff" /></svg>
        <svg viewBox="0 0 12 14" className="ml-[8px] h-[14px] w-3" fill="#fff"><path d="M1 4.500H4L9 1V13L4 9.500H1Z" /></svg>
        <svg viewBox="0 0 24 14" className="ml-[21px] h-[14px] w-6" fill="none" stroke="#fff" strokeWidth="1.400"><path d="M8 2H2V12H8M15 2H20V12H13M22 5V9M12 1L6 8H11L10 13L17 5H12Z" /></svg>
        <span className="ml-[12px] w-[83px] [-webkit-text-stroke:0.3px_#fff]">Mar 14:51</span>
        <span className="w-[70px] tracking-[0.6px] [-webkit-text-stroke:0.6px_#fff]">claudio</span>
        <svg viewBox="0 0 16 16" className="h-[15px] w-[15px]" fill="none" stroke="#fff" strokeWidth="1.500"><circle cx="6.500" cy="6.500" r="5" /><path d="M10 10L15 15" /></svg>
        <svg viewBox="0 0 18 14" className="ml-[15px] h-[13px] w-[18px]" fill="none" stroke="#fff" strokeWidth="1.700"><path d="M0 2H2M5 2H18M0 7H2M5 7H18M0 12H2M5 12H18" /></svg>
      </header>

      <main className="flex h-[805px] shrink-0 flex-col overflow-hidden rounded-[5px] bg-[#ececec] shadow-[0_6px_16px_8px_rgba(0,0,0,0.85)]">
        <div className="flex h-[57px] shrink-0 flex-col border-b border-[#a6a6a6] bg-linear-to-b from-[#e9e7e9] to-[#cfcfcf]">
          <div className="flex h-[22px] items-center pl-2">
            <span className="h-3 w-3 rounded-full bg-[#f93d3c]" />
            <span className="ml-2 h-3 w-3 rounded-full bg-[#fab40f]" />
            <span className="ml-2 h-3 w-3 rounded-full bg-[#0bd63a]" />
            <svg viewBox="0 0 14 14" className="ml-[582px] h-[14px] w-[14px]"><path d="M1 0H13V14H1Z" fill="#f6f6f6" /><path d="M2 1L4 5L6 1L8 5L12 7L13 10L9 13L6 9L2 6Z" fill="#222" /><path d="M5 5L8 9L6 10Z" fill="#ddd" /></svg>
            <span className="ml-[5px] text-[14px] tracking-[0.05px] text-[#4a4a4a]">Copia di molding.3dm</span>
          </div>
          <div className="flex h-[30px] items-center pl-[14px] text-[13px] font-bold tracking-[-0.08px] text-[#484848]">
            <span className="h-[19px] w-5 border-2 border-l-[7px] border-[#2a6ff5]" />
            <span className="ml-[65px] w-[117px]">Snap alla griglia</span>
            <span className="flex h-[17px] w-[60px] items-center justify-center rounded bg-[#848484] text-white">Orto</span>
            <span className="ml-[18px] w-[76px]">Planare</span>
            <span className="w-[90px]">SmartTrack</span>
            <span className="flex h-[17px] w-[73px] items-center justify-center rounded bg-[#848484] text-white">Gumball</span>
            <span className="ml-[19px] w-[363px]">Storia di costruzione</span>
            <svg viewBox="0 0 22 22" className="h-[22px] w-[22px]" fill="none" stroke="#555" strokeWidth="1.100"><circle cx="11" cy="11" r="9" /><path d="M12 11H20" stroke="#000" strokeWidth="1.500" /><rect x="8" y="9.500" width="3.500" height="3.500" fill="#fff" stroke="#000" /></svg>
            <svg viewBox="0 0 22 22" className="ml-[9px] h-[22px] w-[22px]" fill="none" stroke="#111" strokeWidth="1.200"><circle cx="11" cy="11" r="10" /><circle cx="11" cy="11" r="5.700" /></svg>
            <div className="ml-[9px] flex h-[22px] w-[200px] items-center rounded-[4px] bg-[#fbfbfb] pl-[7px] font-normal text-[#333] shadow-[0_1px_0_#bbb]">
              <span className="h-[14px] w-[14px] bg-black" />
              <span className="w-[172px] text-center">Default</span>
            </div>
            <span className="ml-[229px] h-[19px] w-5 border-2 border-r-[7px] border-[#2a6ff5]" />
          </div>
        </div>

        <div className="flex h-[720px] shrink-0">
          <aside className="flex h-[720px] w-[174px] shrink-0 flex-col overflow-hidden border-r border-black bg-[#ececec]">
            <div className="h-[26px] shrink-0 border-b border-[#c6c6c6] bg-linear-to-b from-[#f8f8f8] to-[#e6e6e6]" />
            <div className="mt-[10px] ml-2 flex h-[22px] w-[157px] shrink-0 items-center border border-[#b2b2b2] bg-white pt-[2px] pl-[3px] text-[13px] tracking-[0.5px] text-[#b9b9b9]">Comando</div>
            <div className="mt-[7px] grid h-[308px] w-[150px] shrink-0 grid-cols-5 content-start overflow-hidden">
              {tools.map(([drop, art], i) => <Tool key={i} drop={drop}>{art}</Tool>)}
            </div>
            <div className="flex h-[347px] shrink-0 flex-col overflow-hidden border-t border-[#c4c4c4] pt-[5px] text-[11.5px] tracking-[0.15px]">
              <div className="flex h-[18px] shrink-0 items-center pl-[19px] text-[#222]"><Radio on /><span className="ml-1">Permanente</span></div>
              <div className="mb-[5px] flex h-[18px] shrink-0 items-center pl-[19px] text-[#222]"><Radio /><span className="ml-1">Non permanente</span></div>
              {snaps.map(([label, state]) => <SnapRow key={label} label={label} state={state} />)}
            </div>
          </aside>

          <section className="flex w-[965px] shrink-0 flex-col">
            <div className="flex h-[26px] shrink-0 items-center border-b border-[#a8a8a8] bg-linear-to-b from-[#f8f8f8] to-[#e6e6e6] pl-[6px] text-[13.500px] tracking-[0.05px] text-[#444]">
              <svg viewBox="0 0 22 20" className="h-5 w-[22px]" fill="none" stroke="#777" strokeWidth="1"><path d="M1.500 1.500H21.500V19.500H1.500ZM11.500 1.500V19.500M1.500 10.500H21.500" /><path d="M2 2.500H6M12 2.500H15M2 11.500H6M12 11.500H15" stroke="#333" /></svg>
              <svg viewBox="0 0 22 20" className="ml-[10px] h-5 w-[22px]" fill="none" stroke="#6f9be8" strokeWidth="1"><path d="M1.500 1.500H21.500V19.500H1.500Z" /><path d="M2 2.500H6" stroke="#2a6ff5" /></svg>
              <span className="ml-[11px] h-[14px] w-px bg-[#999]" />
              <span className="w-[112px] pl-[19px] text-[#1463e6]">Perspective</span>
              <span className="h-[14px] w-px bg-[#999]" />
              <span className="w-[62px] pl-[19px]">Top</span>
              <span className="h-[14px] w-px bg-[#999]" />
              <span className="w-[72px] pl-[19px]">Front</span>
              <span className="h-[14px] w-px bg-[#999]" />
              <span className="pl-[19px]">Right</span>
            </div>
            <div className="relative h-[694px] w-[965px]">
              <Model />
              <span className="absolute top-[1px] left-[1px] flex h-[19px] w-[76px] items-center justify-center bg-[#2b5f92] text-[12px] font-bold text-white">Perspective</span>
            </div>
          </section>

          <aside className="flex w-[301px] shrink-0 flex-col border-l border-black bg-white">
            <TabBar />
            <LayerHeader />
            <div className="relative h-[285px] shrink-0">
              <LayerRow on />
              <LayerRow />
              <div className="absolute top-[-4px] left-[7px] flex h-[138px] w-[180px] flex-col bg-[#ececec] shadow-[0_2px_7px_rgba(0,0,0,0.5)]">
                <div className="flex h-4 items-center border-b border-[#cfcfcf] bg-[#f6f6f6] pt-px pl-[6px] text-[11.5px] tracking-[0.05px] text-[#9a9a9a]">
                  <span className="h-[11px] w-[11px] rounded-full border border-[#c8c8c8] bg-[#d8d8d8]" />
                  <span className="ml-auto pr-[7px]">Creazione di superfici</span>
                </div>
                <div className="grid grid-cols-6">
                  {surfaces.map(([drop, art], i) => <Tool key={i} drop={drop}>{art}</Tool>)}
                </div>
              </div>
            </div>
            <LayerFooter />
            <div className="h-[2px] shrink-0 bg-[#8c8c8c]" />
            <TabBar />
            <LayerHeader />
            <div className="h-[283px] shrink-0">
              <LayerRow name="Default" on />
              <LayerRow name="Predefinito" />
            </div>
            <LayerFooter />
          </aside>
        </div>

        <footer className="flex h-7 shrink-0 items-center bg-linear-to-b from-[#dcdcdc] to-[#c6c6c6] pt-px pl-[5px] text-[11.5px] tracking-[0.13px] text-black">
          <svg viewBox="0 0 14 12" className="h-3 w-[14px]" stroke="#555" strokeWidth="1"><path d="M0 1.500H14M0 4.500H14M0 7.500H14M0 10.500H14" /></svg>
          <span className="ml-[2px] w-[982px]">Annullamento Applicazione in corso Vetro</span>
          <span className="flex h-4 w-[70px] items-center justify-between rounded border border-[#8f8f8f] pr-1 pl-[6px]">
            PianoC
            <svg viewBox="0 0 8 12" className="h-3 w-2" fill="none" stroke="#777"><path d="M1.500 4.500L4 2L6.500 4.500M1.500 7.500L4 10L6.500 7.500" /></svg>
          </span>
          <span className="ml-[13px] w-[83px] tracking-[-0.05px]">X: 266.080</span>
          <span className="w-[85px] tracking-[-0.05px]">Y: -481.474</span>
          <span className="tracking-[-0.05px]">Z: 0.000</span>
        </footer>
      </main>

      <div className="mt-[10px] ml-[42px] flex h-[62px] w-[1355px] shrink-0 rounded-t bg-linear-to-r from-[#3b2a2d] via-[#502f36] to-[#42302f] pl-[3px] shadow-[0_0_0_1px_rgba(255,255,255,0.04)]">
        {dock.map(([running, art], i) => <DockItem key={i} running={running}>{art}</DockItem>)}
        <span className="mt-[7px] ml-[12px] h-[48px] w-px bg-[#7c6668]" />
        <div className="ml-[10px] flex">
          {stack.map((art, i) => <DockItem key={i}>{art}</DockItem>)}
        </div>
      </div>
    </div>
  );
}
